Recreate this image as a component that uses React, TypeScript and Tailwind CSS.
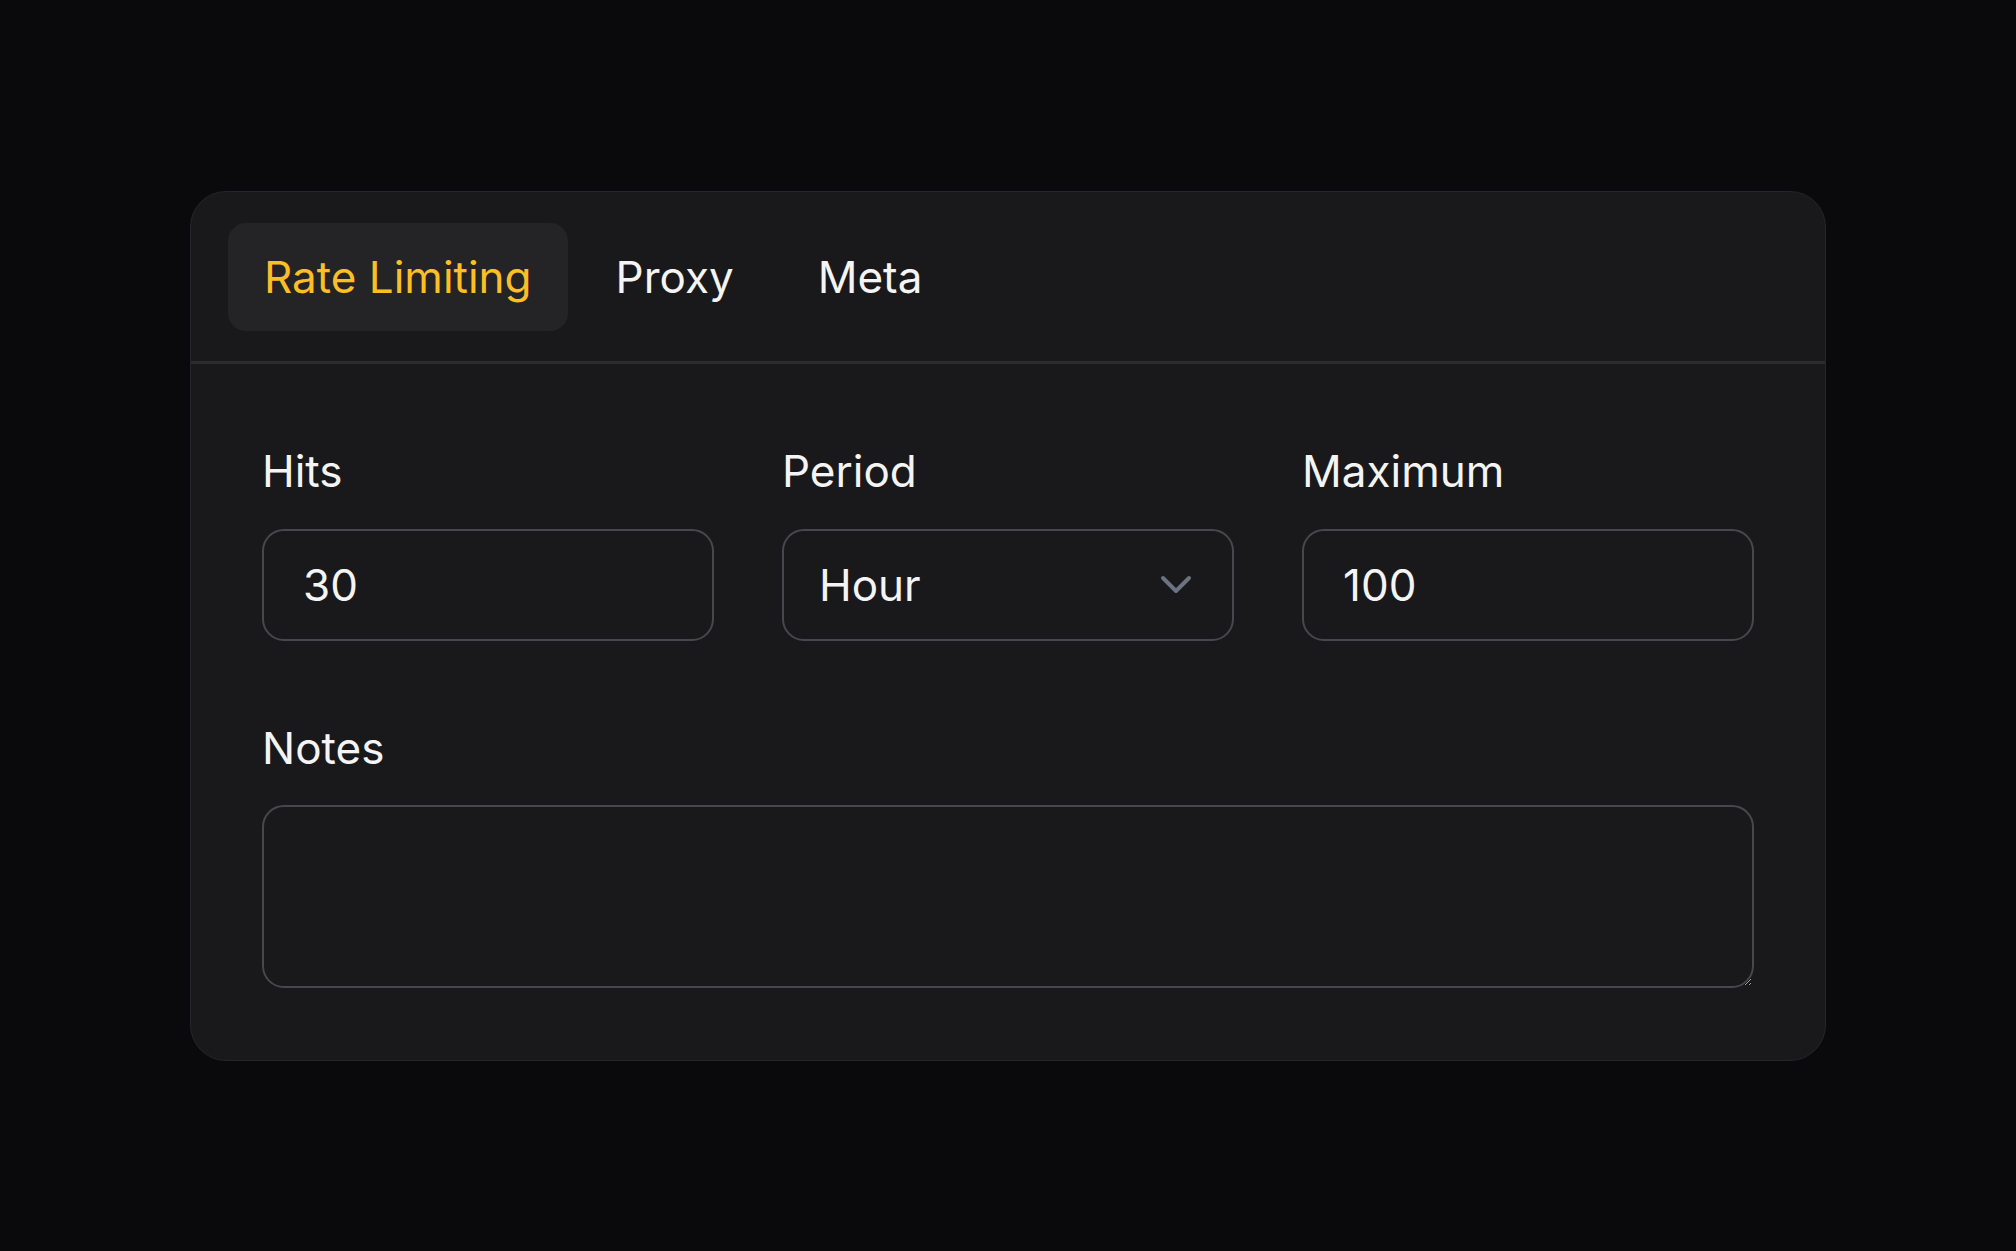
import { useState } from 'react'

const TABS = ['Rate Limiting', 'Proxy', 'Meta']

const FONT = { fontFamily: 'Inter, "Noto Sans", sans-serif' }

function Field({ label, children }: { label: string; children: React.ReactNode }) {
  return (
    <div className="flex flex-col">
      <label className="mb-[32px] block text-[44px] leading-[52px] text-[#f4f4f5]">{label}</label>
      {children}
    </div>
  )
}

function App() {
  const [tab, setTab] = useState('Rate Limiting')
  const [hits, setHits] = useState('30')
  const [period, setPeriod] = useState('Hour')
  const [max, setMax] = useState('100')
  const [notes, setNotes] = useState('')

  return (
    <div className="flex min-h-screen items-center justify-center bg-[#0a0a0c]" style={FONT}>
      <div className="w-[1636px] rounded-[36px] border border-[#26262a] bg-[#19191b]">
        <div className="flex items-center gap-[12px] border-b-[3px] border-[#2c2c2f] px-[37px] pb-[30px] pt-[31px]">
          {TABS.map((t) => (
            <button
              key={t}
              onClick={() => setTab(t)}
              className={
                t === tab
                  ? 'h-[108px] rounded-[18px] bg-[#242427] px-[36px] text-[44px] text-[#fbbf24]'
                  : 'h-[108px] rounded-[18px] px-[36px] text-[44px] text-[#f4f4f5]'
              }
            >
              {t}
            </button>
          ))}
        </div>

        <div className="px-[71px] pb-[72px] pt-[81px]">
          <div className="grid grid-cols-3 gap-x-[68px]">
            <Field label="Hits">
              <input
                value={hits}
                onChange={(e) => setHits(e.target.value)}
                className="h-[112px] w-full rounded-[22px] border-[2.5px] border-[#48484c] bg-transparent px-[39px] text-[44px] text-[#f4f4f5] outline-none"
              />
            </Field>
            <Field label="Period">
              <div className="relative">
                <select
                  value={period}
                  onChange={(e) => setPeriod(e.target.value)}
                  className="h-[112px] w-full appearance-none rounded-[22px] border-[2.5px] border-[#48484c] bg-transparent px-[35px] text-[44px] text-[#f4f4f5] outline-none"
                >
                  <option>Minute</option>
                  <option>Hour</option>
                  <option>Day</option>
                </select>
                <svg
                  className="pointer-events-none absolute right-[42px] top-1/2 -translate-y-1/2"
                  width="32"
                  height="20"
                  viewBox="0 0 32 20"
                  fill="none"
                >
                  <polyline points="3,3 16,16 29,3" stroke="#6b7280" strokeWidth="4" strokeLinecap="round" strokeLinejoin="round" />
                </svg>
              </div>
            </Field>
            <Field label="Maximum">
              <input
                value={max}
                onChange={(e) => setMax(e.target.value)}
                className="h-[112px] w-full rounded-[22px] border-[2.5px] border-[#48484c] bg-transparent px-[39px] text-[44px] text-[#f4f4f5] outline-none"
              />
            </Field>
          </div>

          <div className="mt-[81px]">
            <label className="mb-[31px] block text-[44px] leading-[52px] text-[#f4f4f5]">Notes</label>
            <textarea
              value={notes}
              onChange={(e) => setNotes(e.target.value)}
              className="block h-[183px] w-full rounded-[22px] border-[2.5px] border-[#48484c] bg-transparent px-[39px] py-[24px] text-[44px] text-[#f4f4f5] outline-none [color-scheme:dark]"
            />
          </div>
        </div>
      </div>
    </div>
  )
}

export default App
